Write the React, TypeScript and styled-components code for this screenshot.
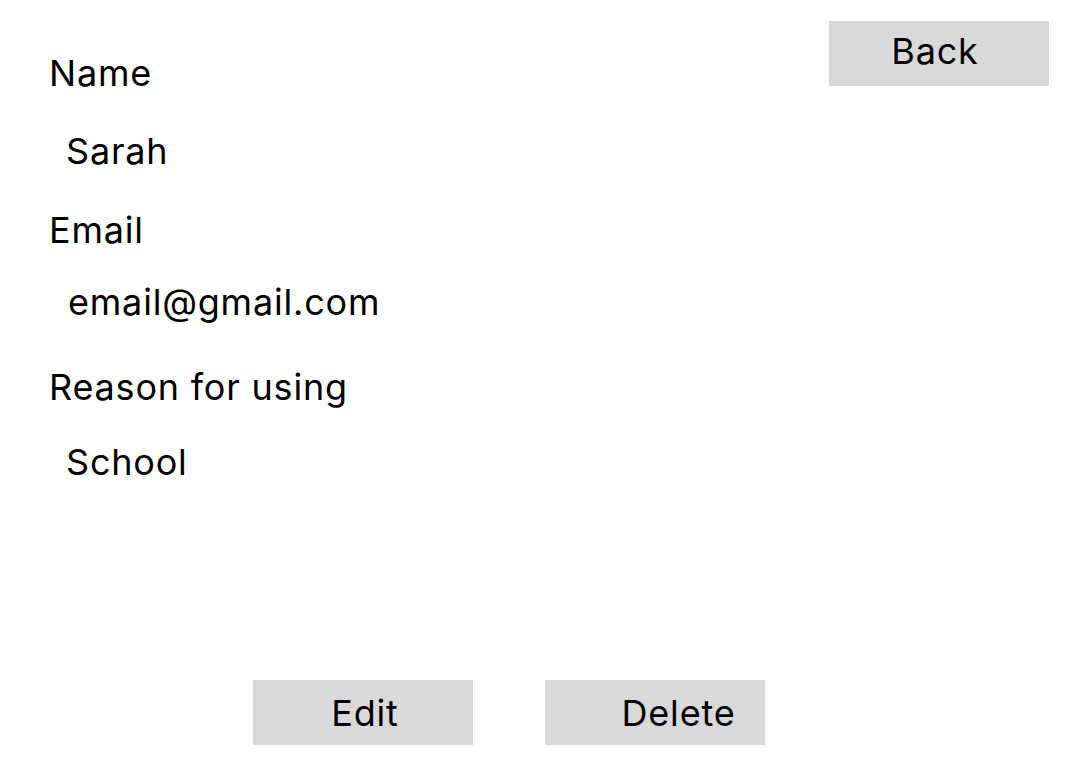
import React from "react";
import styled, { createGlobalStyle } from "styled-components";

const Global = createGlobalStyle`
  html, body { margin: 0; padding: 0; background: #ffffff; }
  body { font-family: Inter, "Noto Sans", sans-serif; color: #000; }
`;

const Page = styled.div`
  width: 1080px;
  height: 768px;
  display: flex;
  flex-direction: column;
  box-sizing: border-box;
  padding-bottom: 23px;
`;

const Top = styled.div`
  display: flex;
  justify-content: space-between;
  align-items: flex-start;
  padding: 21px 31px 0 49px;
`;

const Fields = styled.div`
  display: flex;
  flex-direction: column;
  padding-top: 34px;
`;

const Text = styled.div<{ $mt?: number; $ml?: number }>`
  font-size: 36px;
  line-height: 36px;
  letter-spacing: 0.8px;
  font-weight: 400;
  margin-top: ${(p) => p.$mt ?? 0}px;
  margin-left: ${(p) => p.$ml ?? 0}px;
  white-space: nowrap;
`;

const Button = styled.button<{ $shift?: number; $lift?: number }>`
  width: 220px;
  height: 65px;
  box-sizing: border-box;
  background: #d9d9d9;
  border: none;
  border-radius: 0;
  padding: 0 ${(p) => ((p.$shift ?? 0) < 0 ? -(p.$shift ?? 0) : 0)}px
    ${(p) => p.$lift ?? 0}px ${(p) => ((p.$shift ?? 0) > 0 ? p.$shift : 0)}px;
  font-family: Inter, "Noto Sans", sans-serif;
  font-size: 36px;
  line-height: 36px;
  letter-spacing: 0.8px;
  color: #000;
  display: flex;
  align-items: center;
  justify-content: center;
`;

const Bottom = styled.div`
  margin-top: auto;
  display: flex;
  gap: 72px;
  padding-left: 253px;
`;

export default function App() {
  return (
    <Page>
      <Global />
      <Top>
        <Fields>
          <Text>Name</Text>
          <Text $mt={42} $ml={17}>Sarah</Text>
          <Text $mt={43}>Email</Text>
          <Text $mt={36} $ml={19}>email@gmail.com</Text>
          <Text $mt={49}>Reason for using</Text>
          <Text $mt={39} $ml={17}>School</Text>
        </Fields>
        <Button $shift={-8} $lift={5}>Back</Button>
      </Top>
      <Bottom>
        <Button $shift={4} $lift={0}>Edit</Button>
        <Button $shift={47} $lift={0}>Delete</Button>
      </Bottom>
    </Page>
  );
}
